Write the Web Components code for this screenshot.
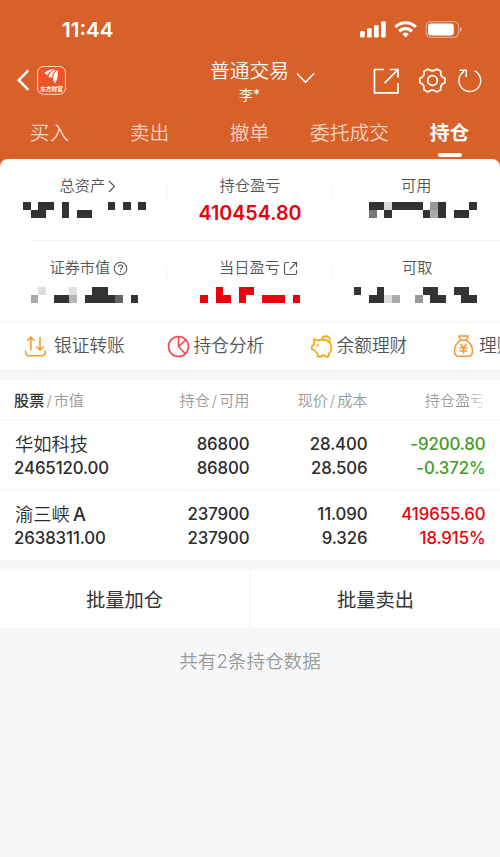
<!DOCTYPE html>
<html lang="zh-CN">
<head>
<meta charset="utf-8">
<meta name="viewport" content="width=device-width">
<title>普通交易</title>
<style>
body{margin:0;background:#f6f7f9;font-family:Inter,"Noto Sans CJK SC",sans-serif;color:#333;overflow:hidden}
</style>
</head>
<body>
<trade-app></trade-app>
<script>
const define = (name, html, init) => {
  const t = document.createElement('template');
  t.innerHTML = html;
  customElements.define(name, class extends HTMLElement {
    constructor() {
      super();
      this.attachShadow({ mode: 'open' }).append(t.content.cloneNode(true));
    }
    connectedCallback() { if (init) init(this, this.shadowRoot); }
  });
};

define('status-bar', `
<style>
:host{display:flex;height:60px;box-sizing:border-box;padding:0 37px 0 62px;justify-content:space-between;align-items:center;color:#fff}
b{font:600 20.6px/60px Inter,sans-serif;letter-spacing:0}
svg{display:block}
</style>
<b>11:44</b>
<svg width="104" height="20" viewBox="359 20 104 20" fill="#fff">
<rect x="360" y="31" width="4.7" height="6.5" rx="1.2"/><rect x="367" y="28.3" width="4.7" height="9.2" rx="1.2"/><rect x="374" y="25" width="4.7" height="12.5" rx="1.2"/><rect x="381" y="21.2" width="4.7" height="16.3" rx="1.2"/>
<g fill="none" stroke="#fff" stroke-width="3.2"><path d="M395.4 27a14.4 14.4 0 0 1 20.4 0"/><path d="M399.2 31.3a9 9 0 0 1 12.8 0"/></g>
<path d="M402.3 34a4.8 4.8 0 0 1 6.6 0l-3.3 3.4z"/>
<rect x="426.2" y="21.6" width="32.4" height="15.8" rx="4.8" fill="none" stroke="#fff" stroke-opacity=".42" stroke-width="1.2"/>
<rect x="428" y="23.5" width="25.8" height="12" rx="3.2"/><path d="M460 27v5c2.4-.8 2.4-4.2 0-5z" opacity=".5"/>
</svg>`);

define('nav-bar', `
<style>
:host{display:grid;grid-template-columns:1fr 110px 1fr;height:49px;color:#fff}
.l,.r{display:flex;align-items:flex-start;padding-top:4px}
.l{padding-left:16px}.r{justify-content:flex-end;padding-right:17px}
.c{display:flex;flex-direction:column;width:110px}
.t{display:flex;align-items:center;font-size:19.8px;line-height:22px;height:22px;gap:7px;padding-left:15px;font-weight:350;white-space:nowrap}
.s{font-size:14px;line-height:18px;padding-left:44px;margin-top:4px}
svg{display:block;flex:none}
</style>
<div class="l"><svg width="52" height="34" viewBox="16 64 52 34" fill="none">
<path d="M28.3 70.3L18.800 80.2l9.5 9.7" stroke="#fff" stroke-width="2.5"/>
<rect x="37.6" y="66.5" width="27.8" height="27.8" rx="6" fill="#ee5427" stroke="#fff" stroke-opacity=".8"/>
<g fill="#fff"><path d="M44 73.6c2.8-2.8 6.6-4.5 10.3-4.5-3.8 1.8-6 4.1-7.3 6.5-.3-1.4-1.3-2.1-3-2z"/><path d="M48.4 77.6c.6-4 3-7 7.7-8.2-3 2.7-4.1 5.6-4 8.9-.9-1-2.1-1.400-3.7-.7z"/><path d="M53 80.6c-.5-4.3 1-8.2 4.500-10.700 1.200 3.900.3 9.900-3 13.900.1-1.400-.3-2.500-1.500-3.200z"/></g>
<text x="51.5" y="91" text-anchor="middle" fill="#fff" font-family="Noto Sans CJK SC,sans-serif" font-weight="700" font-size="5.7">东方财富</text></svg></div>
<div class="c"><div class="t">普通交易<svg width="20" height="14" viewBox="0 0 20 14" style="margin-top:15px"><path d="M1 1.500L9.500 10.300l8.500-8.800" fill="none" stroke="#fff" stroke-width="1.6"/></svg></div><div class="s">李*</div></div>
<div class="r"><svg width="112" height="34" viewBox="371 64 112 34" fill="none" stroke="#fff" stroke-width="1.7">
<path d="M384 69.500h-9.500v23.400H398V83.200M389.800 69.500H398v8M397.600 70L384.600 83.200"/>
<path d="M428 69q4.400 3.500 8.800 0l4 2.300q-.9 5.600 4.200 7v4.300q-5.100 1.700-4.200 7.100l-4 2.200q-4.400-3.500-8.800 0l-4-2.200q.9-5.400-4.200-7.100v-4.300q5.100-1.400 4.200-7z" stroke-linejoin="round"/><circle cx="432.500" cy="80.500" r="4.800"/>
<path d="M474.500 70.800a10.900 10.900 0 1 1-10.500.6M459.500 70.200h6.800v6.800" stroke-width="1.400"/>
</svg></div>`);

define('tab-strip', `
<style>
:host{display:grid;grid-template-columns:repeat(5,1fr);grid-template-rows:44px 4px;height:50px;font-size:19.8px;line-height:48px;font-weight:350;color:rgba(255,255,255,.72);text-align:center;white-space:nowrap}
::slotted(span){margin-left:-1px}
::slotted([active]){color:#fff;font-weight:700}
.bar{grid-column:5;justify-self:center;width:24px;height:4px;border-radius:2px;background:#fff}
</style><slot></slot><i class="bar"></i>`);

define('pixel-mask', `
<style>:host{display:block;height:16px}svg{display:block;width:100%;height:16px;overflow:visible;shape-rendering:crispEdges}</style><svg></svg>`,
(el, root) => {
  const u = 500 / 65, svg = root.querySelector('svg');
  svg.setAttribute('viewBox', el.getAttribute('origin') + ' 0 166.67 16');
  svg.setAttribute('preserveAspectRatio', 'xMinYMin');
  const base = el.getAttribute('tint') || '#333';
  svg.innerHTML = ['top', 'bottom'].map((r, i) => (el.getAttribute(r) || '').split(' ').filter(Boolean).map(s => {
    const [span, c] = s.split(':'), [a, b = a] = span.split('-').map(Number);
    return `<rect x="${a * u}" y="${i * 8}" width="${(b - a + 1) * u}" height="8" fill="${c || base}"/>`;
  }).join('')).join('');
});

define('stat-cell', `
<style>
:host{display:grid;grid-template-columns:1fr 1px;height:81px;box-sizing:border-box;padding-top:16px}
.k{display:flex;justify-content:center;align-items:center;height:22px;font-size:15.2px;font-weight:350;color:#555;line-height:22px;gap:3px;padding-left:var(--dx,0)}
.v{margin:5px -1px 0 0;height:22px;text-align:center;font:600 19.7px/22px Inter,sans-serif;color:#ec000c}
:host([low]) .v{margin-top:8px}
:host([rule]) i{background:#f5f5f5}
i{height:17px;margin-top:8px}
</style><div><div class="k"><slot name="label"></slot></div><div class="v"><slot></slot></div></div><i></i>`);

define('quick-link', `
<style>
:host{display:flex;align-items:center;gap:7px;flex:none;font-size:17.7px;font-weight:350;color:#555;white-space:nowrap;line-height:46px}
</style><slot name="icon"></slot><span><slot></slot></span>`);

define('holding-row', `
<style>
:host{display:grid;grid-template-columns:116px 119.5px 118px 118px;height:70px;box-sizing:border-box;padding:10.5px 0 0 14px;border-bottom:1px solid #f3f3f4;background:#fff;font:500 16.8px/24.5px Inter,"Noto Sans CJK SC",sans-serif;letter-spacing:-.1px;text-align:right;color:#2b2b2b}
.n{text-align:left}.nm{font-size:18.3px;font-weight:350;padding-left:1px;letter-spacing:0}
::slotted([slot=name]){word-spacing:-2px}
.p{color:var(--pl)}
</style>
<div class="n"><div class="nm"><slot name="name"></slot></div><slot name="value"></slot></div>
<div><slot name="qty"></slot></div><div><slot name="price"></slot></div><div class="p"><slot name="pl"></slot></div>`);

define('trade-app', `
<style>
:host{display:block;width:500px;height:857px;overflow:hidden;background:#f6f7f9}
header{background:#d86029;height:159px}
.under{background:#d86029}
.card{background:#fff;border-radius:8px 8px 0 0;height:210px;overflow:hidden}
.stats{display:grid;grid-template-columns:repeat(3,1fr)}
.hr{height:1px;background:#f3f3f4}
.hr.in{margin-left:32px}
.links{display:flex;height:46px}
svg{display:block}
.th{margin-top:11px;display:grid;grid-template-columns:116px 119.5px 118px 118px;padding-left:14px;height:41px;background:#fff;border-bottom:2px solid #f5f6f7;box-sizing:border-box;font-size:15.2px;line-height:42px;font-weight:350;color:#999;text-align:right}
.th b{color:#333;font-weight:500}
.th i{font-style:normal;padding:0 2px}
.th :first-child{text-align:left}
.fade{background:linear-gradient(90deg,#999 86%,#fff 101%);-webkit-background-clip:text;background-clip:text;color:transparent}
.btns{margin-top:8.5px;display:grid;grid-template-columns:1fr 1fr;gap:2px;height:58.5px;text-align:center;font-size:19.3px;line-height:58.5px;color:#333}
.btns div{background:#fff;box-sizing:border-box;height:58.5px;padding-top:1px}
p{margin:0;text-align:center;font-size:18.6px;font-weight:350;color:#999;line-height:66px}
</style>
<header><status-bar></status-bar><nav-bar></nav-bar>
<tab-strip><span>买入</span><span>卖出</span><span>撤单</span><span>委托成交</span><span active>持仓</span></tab-strip></header>
<div class="under"><div class="card">
<div class="stats">
<stat-cell rule style="--dx:10px"><span slot="label">总资产</span><svg slot="label" width="8" height="13" viewBox="0 0 8 13"><path d="M1 1l5.500 5.500L1 12" fill="none" stroke="#555" stroke-width="1.200"/></svg><pixel-mask origin="0" top="3 5-6 8 14 16 18" bottom="4-5 8 10-11"></pixel-mask></stat-cell>
<stat-cell rule style="--dx:1px"><span slot="label">持仓盈亏</span>410454.80</stat-cell>
<stat-cell><span slot="label">可用</span><pixel-mask origin="333.33" top="48-49 50:#d9d9d9 51-54 56:#999 57 61" bottom="48:#777 50 55 56:#aaa 57 59-60"></pixel-mask></stat-cell>
</div>
<div class="hr in"></div>
<div class="stats">
<stat-cell rule low style="--dx:12px"><span slot="label">证券市值</span><svg slot="label" width="15" height="15" viewBox="0 0 15 15" fill="none" stroke="#555" stroke-width="1.100"><circle cx="7.500" cy="7.500" r="6.300"/><path d="M5.500 6c0-2.800 4-2.600 4-.2 0 1.500-2 1.500-2 3.200M7.500 10v1.300"/></svg><pixel-mask origin="0" top="5:#e0e0e0 9:#e0e0e0 12-13" bottom="4:#aaa 7-8 9:#b5b5b5 11-14 15:#666 17"></pixel-mask></stat-cell>
<stat-cell rule low style="--dx:18px"><span slot="label">当日盈亏</span><svg slot="label" width="15" height="15" viewBox="0 0 15 15" fill="none" stroke="#555" stroke-width="1.100"><path d="M6 1.500H3Q1.500 1.500 1.500 3V12Q1.500 13.500 3 13.500H12Q13.500 13.500 13.500 12V9M9 1.500h4.500V6M13.300 1.700L7 8"/></svg><pixel-mask origin="166.67" tint="#ec000c" top="28 31-32" bottom="26 28-29 31 34-36 38"></pixel-mask></stat-cell>
<stat-cell low style="--dx:2px"><span slot="label">可取</span><pixel-mask origin="333.33" top="46 49 55-56 59-60" bottom="48-49 50:#ddd 51:#aaa 54:#999 56-57 60-61"></pixel-mask></stat-cell>
</div>
<div class="hr"></div>
<div class="links">
<quick-link style="margin-left:24px;width:143px"><svg slot="icon" width="23" height="23" viewBox="0 0 23 23" fill="none" stroke="#f29a2e" stroke-width="1.600"><path d="M1.500 15.500c0 4 1 5.300 3.500 5.300h13c2.500 0 3.500-1.300 3.500-5.300M6.900 15.500V2.200M3.200 5.800l3.700-3.700 3.700 3.700M16 2v13.200M12.400 11.500l3.600 3.700 3.700-3.700"/></svg>银证转账</quick-link>
<quick-link style="width:143.500px;gap:3.5px"><svg slot="icon" width="23" height="23" viewBox="0 0 23 23" fill="none" stroke="#f5484b" stroke-width="1.600"><circle cx="11.500" cy="11.500" r="10"/><path d="M11.500 1.500v10l6.800 7.200M11.500 11.500l7.300-6.300"/></svg>持仓分析</quick-link>
<quick-link style="width:142.500px;gap:3px"><svg slot="icon" width="23" height="23" viewBox="0.8 0 23 23" fill="none" stroke="#f8a30d" stroke-width="1.600" stroke-linejoin="round"><path d="M4 4l3.700 1.500Q9 4.900 10.700 4.900H14q7.200 1 7.200 8 0 3.700-2.700 5.700v3h-4v-1.400h-3v1.400h-4v-3Q5.400 17.500 4.600 15.500L1.600 14v-3L4 9.500zM11.600 4.900C11.800-.2 19.400-.2 19.600 5q0 1.400-.8 2.300"/><circle cx="7.500" cy="10.500" r=".4"/></svg>余额理财</quick-link>
<quick-link style="gap:5px"><svg slot="icon" width="21" height="23" viewBox="0 0 20 23" fill="none" stroke="#f39530" stroke-width="1.500" stroke-linejoin="round"><path d="M5.300 1h9.400l-2 4.300H7.300zM7 5.300C3.500 7.500 1 12 1 16.200c0 3.700 1.200 5 4.600 5h8.800c3.400 0 4.600-1.300 4.600-5 0-4.200-2.500-8.700-6-10.900M6.800 9l3.200 4 3.200-4M6 13h8M6 15.900h8M10 13v5.500"/></svg>理财</quick-link>
</div></div></div>
<div class="th"><div><b>股票</b><i>/</i>市值</div><div>持仓<i>/</i>可用</div><div>现价<i>/</i>成本</div><div class="fade">持仓盈亏</div></div>
<holding-row style="--pl:#429c25"><div slot="name">华如科技</div><div slot="value">2465120.00</div><div slot="qty">86800</div><div slot="qty">86800</div><div slot="price">28.400</div><div slot="price">28.506</div><div slot="pl">-9200.80</div><div slot="pl">-0.372%</div></holding-row>
<holding-row style="--pl:#ec000c"><div slot="name">渝三峡 <span style="font-weight:450">A</span></div><div slot="value">2638311.00</div><div slot="qty">237900</div><div slot="qty">237900</div><div slot="price">11.090</div><div slot="price">9.326</div><div slot="pl">419655.60</div><div slot="pl">18.915%</div></holding-row>
<div class="btns"><div>批量加仓</div><div>批量卖出</div></div>
<p>共有2条持仓数据</p>`);
</script>
</body>
</html>
